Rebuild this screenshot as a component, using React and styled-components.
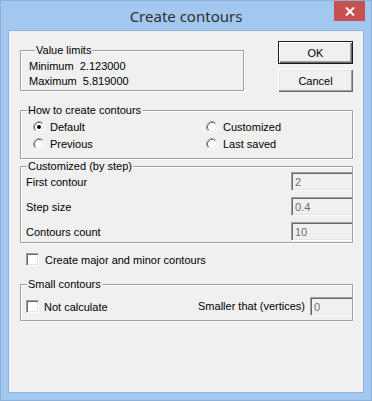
import React from 'react';
import styled, { createGlobalStyle } from 'styled-components';

const Global = createGlobalStyle`
  html, body { margin: 0; padding: 0; background: #a2c8f0; }
  body { font-family: "Liberation Sans", Arial, sans-serif; }
  * { box-sizing: border-box; }
`;

const Window = styled.div`
  width: 372px;
  height: 401px;
  background: #a2c8f0;
  border: 1px solid #8cb2dc;
  display: flex;
  flex-direction: column;
  padding: 0 7px 7px 7px;
`;

const TitleBar = styled.div`
  height: 29px;
  margin: 0 -7px;
  display: grid;
  grid-template-columns: 1fr auto 1fr;
  align-items: start;
`;

const Title = styled.div`
  grid-column: 2;
  align-self: center;
  font-family: "Noto Sans", "Open Sans", sans-serif;
  font-size: 15px;
  color: #2f2f2f;
  margin-top: 1px;
  letter-spacing: 0;
`;

const CloseButton = styled.div`
  grid-column: 3;
  justify-self: end;
  margin-right: 6px;
  width: 31px;
  height: 20px;
  background: #c75050;
  display: flex;
  align-items: center;
  justify-content: center;
`;

const Client = styled.div`
  flex: 1;
  background: #f0f0f0;
  border: 1px solid #8fb4db;
  padding: 10px 10px 0 11px;
  display: flex;
  flex-direction: column;
  font-size: 11px;
  color: #000;
`;

const TopRow = styled.div`
  display: flex;
  justify-content: space-between;
  align-items: flex-start;
`;

const Group = styled.fieldset`
  margin: ${(p) => p.$mt || 0}px 0 0 0;
  width: ${(p) => (p.$w ? `${p.$w}px` : 'auto')};
  min-width: 0;
  border: 1px solid #a0a0a0;
  box-shadow: inset 1px 1px 0 #fff, 1px 1px 0 #fff;
  padding: ${(p) => p.$pad || '0'};
`;

const Legend = styled.legend`
  margin-left: 6px;
  padding: 0 1px;
  line-height: 13px;
  height: 13px;
  font-size: 11px;
  background: #f0f0f0;
  position: relative;
`;

const InfoLine = styled.div`
  line-height: 15px;
  white-space: pre;
`;

const ButtonColumn = styled.div`
  display: flex;
  flex-direction: column;
  gap: 5px;
`;

const Button = styled.div`
  width: 75px;
  height: 23px;
  display: flex;
  align-items: center;
  justify-content: center;
  font-size: 11px;
  background: #f0f0f0;
  border: ${(p) => (p.$default ? '1px solid #1a1a1a' : 'none')};
  box-shadow: ${(p) =>
    p.$default
      ? 'inset 1px 1px 0 #fff, inset -1px -1px 0 #696969, inset -2px -2px 0 #a0a0a0'
      : 'inset 1px 1px 0 #fff, inset -1px -1px 0 #696969, inset -2px -2px 0 #a0a0a0, inset 2px 2px 0 #e3e3e3'};
`;

const RadioGrid = styled.div`
  display: grid;
  grid-template-columns: 173px 1fr;
  grid-auto-rows: 17px;
  padding: 1px 0 6px 12px;
`;

const Option = styled.label`
  display: flex;
  align-items: center;
  gap: 5px;
  font-size: 11px;
`;

const StepRows = styled.div`
  display: flex;
  flex-direction: column;
  gap: 6px;
  margin-top: -1px;
  padding: 0 0 1px 5px;
`;

const StepRow = styled.div`
  height: 19px;
  display: flex;
  align-items: center;
  justify-content: space-between;
`;

const Field = styled.div`
  width: ${(p) => p.$w}px;
  height: 19px;
  background: #f0f0f0;
  color: #6d6d6d;
  font-size: 11px;
  line-height: 15px;
  padding: 2px 0 0 3px;
  border-top: 1px solid #a0a0a0;
  border-left: 1px solid #a0a0a0;
  border-bottom: 1px solid #fff;
  box-shadow: inset 1px 1px 0 #696969, inset 0 -1px 0 #e3e3e3;
`;

const CheckRow = styled.div`
  display: flex;
  align-items: center;
  gap: ${(p) => p.$gap || 6}px;
  margin: ${(p) => p.$m || '0'};
  height: 13px;
`;

const Box = styled.span`
  width: 13px;
  height: 13px;
  flex: none;
  background: #fff;
  border-top: 1px solid #a0a0a0;
  border-left: 1px solid #a0a0a0;
  border-right: 1px solid #fff;
  border-bottom: 1px solid #fff;
  box-shadow: inset 1px 1px 0 #696969, inset -1px -1px 0 #e3e3e3;
`;

const SmallRow = styled.div`
  height: 19px;
  display: flex;
  align-items: center;
  padding-left: 5px;
`;

const Spacer = styled.div`
  flex: 1;
`;

const SideLabel = styled.span`
  margin-right: 5px;
  margin-top: -2px;
`;

const Radio = ({ checked }) => (
  <svg width="12" height="12" viewBox="0 0 12 12" style={{ flex: 'none' }}>
    <circle cx="6" cy="6" r="5" fill="#fff" />
    <path d="M2.11 9.89 A5.5 5.5 0 0 1 9.89 2.11" fill="none" stroke="#a0a0a0" strokeWidth="1" />
    <path d="M9.89 2.11 A5.5 5.5 0 0 1 2.11 9.89" fill="none" stroke="#ffffff" strokeWidth="1" />
    <path d="M2.82 9.18 A4.5 4.5 0 0 1 9.18 2.82" fill="none" stroke="#696969" strokeWidth="1" />
    <path d="M9.18 2.82 A4.5 4.5 0 0 1 2.82 9.18" fill="none" stroke="#e3e3e3" strokeWidth="1" />
    {checked && <circle cx="6" cy="6" r="2" fill="#000" />}
  </svg>
);

export default function App() {
  return (
    <>
      <Global />
      <Window>
        <TitleBar>
          <Title>Create contours</Title>
          <CloseButton>
            <svg width="10" height="9" viewBox="0 0 10 9">
              <path d="M1 0.5 L9 8.5 M9 0.5 L1 8.5" stroke="#fff" strokeWidth="2" />
            </svg>
          </CloseButton>
        </TitleBar>
        <Client>
          <TopRow>
            <Group $w={224} $mt={3} $pad="2px 0 1px 8px">
              <Legend>Value limits</Legend>
              <InfoLine>Minimum  2.123000</InfoLine>
              <InfoLine>Maximum  5.819000</InfoLine>
            </Group>
            <ButtonColumn>
              <Button $default>OK</Button>
              <Button>Cancel</Button>
            </ButtonColumn>
          </TopRow>

          <Group $mt={12}>
            <Legend>How to create contours</Legend>
            <RadioGrid>
              <Option><Radio checked />Default</Option>
              <Option><Radio />Customized</Option>
              <Option><Radio />Previous</Option>
              <Option><Radio />Last saved</Option>
            </RadioGrid>
          </Group>

          <Group $mt={1}>
            <Legend>Customized (by step)</Legend>
            <StepRows>
              <StepRow>First contour<Field $w={61}>2</Field></StepRow>
              <StepRow>Step size<Field $w={61}>0.4</Field></StepRow>
              <StepRow>Contours count<Field $w={61}>10</Field></StepRow>
            </StepRows>
          </Group>

          <CheckRow $m="10px 0 0 6px">
            <Box />
            Create major and minor contours
          </CheckRow>

          <Group $mt={12} $pad="6px 0 4px 0">
            <Legend>Small contours</Legend>
            <SmallRow>
              <CheckRow $gap={5}>
                <Box />
                Not calculate
              </CheckRow>
              <Spacer />
              <SideLabel>Smaller that (vertices)</SideLabel>
              <Field $w={42}>0</Field>
            </SmallRow>
          </Group>
        </Client>
      </Window>
    </>
  );
}
